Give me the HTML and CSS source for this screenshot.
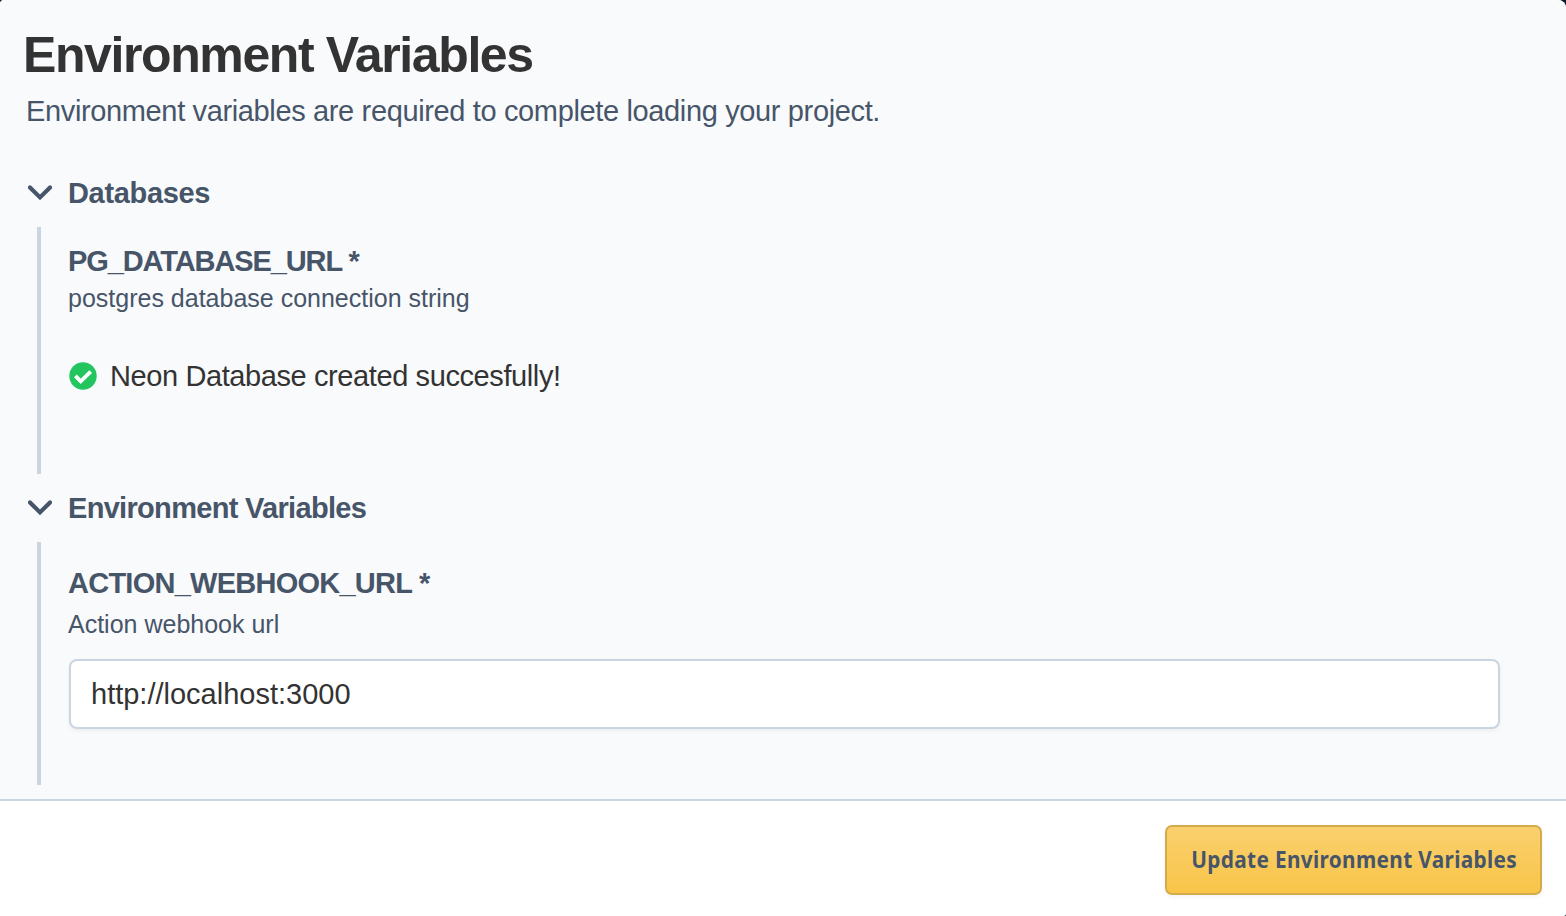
FILE: index.html
```html
<!DOCTYPE html>
<html lang="en">
<head>
<meta charset="utf-8">
<title>Environment Variables</title>
<link rel="stylesheet" href="styles.css">
</head>
<body>
<div class="modal">
  <main class="content">
    <h1 class="title">Environment Variables</h1>
    <p class="subtitle">Environment variables are required to complete loading your project.</p>

    <section class="group">
      <h2 class="group-head group-head-db">
        <svg class="chevron" viewBox="0 0 24 16"><path d="M2 2.4 12 12.4 22 2.4"/></svg>
        <span>Databases</span>
      </h2>
      <div class="group-body group-body-db">
        <h3 class="var-name var-name-db">PG_DATABASE_URL *</h3>
        <p class="var-desc">postgres database connection string</p>
        <div class="status">
          <svg class="check" viewBox="0 0 28 28"><circle cx="14" cy="14" r="13.7"/><path d="M6.4 13.9 11.7 19.3 21.7 9.6"/></svg>
          <span>Neon Database created succesfully!</span>
        </div>
      </div>
    </section>

    <section class="group group-env">
      <h2 class="group-head">
        <svg class="chevron" viewBox="0 0 24 16"><path d="M2 2.4 12 12.4 22 2.4"/></svg>
        <span>Environment Variables</span>
      </h2>
      <div class="group-body group-body-env">
        <h3 class="var-name">ACTION_WEBHOOK_URL *</h3>
        <p class="var-desc var-desc-env">Action webhook url</p>
        <input class="field" type="text" value="http://localhost:3000" aria-label="ACTION_WEBHOOK_URL">
      </div>
    </section>
  </main>
  <footer class="footer">
    <button class="button" type="button"><span class="button-label">Update Environment Variables</span></button>
  </footer>
</div>
</body>
</html>
```
FILE: styles.css
```css
* { box-sizing: border-box; margin: 0; padding: 0; }
body {
  height: 916px;
  overflow: hidden;
  background: #0f172a;
  color: #475569;
  font: 29px/40px "Liberation Sans", Arial, sans-serif;
}
.modal {
  display: flex;
  flex-direction: column;
  height: 916px;
  overflow: hidden;
  border-radius: 4px 8px 2px 0;
  background: #fff;
}
.content {
  height: 801px;
  padding: 27px 66px 0 26px;
  border-bottom: 2px solid #cbd5e1;
  background: #f9fafc;
}
.title {
  margin: 0 0 8px -3px;
  color: #333;
  font-size: 50px;
  line-height: 56px;
  letter-spacing: -1.4px;
}
.subtitle { margin-bottom: 42px; letter-spacing: -.36px; }
.group-head {
  display: flex;
  align-items: center;
  gap: 16px;
  padding-left: 2px;
  margin-bottom: 14px;
  font-size: 29px;
  letter-spacing: -.69px;
}
.group-head-db { letter-spacing: -.33px; }
.chevron { width: 24px; height: 16px; }
.chevron path {
  fill: none;
  stroke: #475569;
  stroke-width: 4.2;
  stroke-linecap: round;
}
.group-body {
  margin-left: 11px;
  padding-left: 28px;
  border-left: 4px solid #cbd5e1;
}
.group-body-db { height: 247px; padding-top: 14px; }
.group-body-env { height: 243px; padding-top: 21px; }
.group-env { margin-top: 14px; }
.var-name { margin-left: -1px; font-size: 29px; letter-spacing: -.75px; }
.var-name-db { letter-spacing: -1.1px; }
.var-desc { margin-left: -1px; font-size: 25px; line-height: 34px; }
.var-desc-env { margin: 4px 0 18px -1px; }
.status {
  display: flex;
  align-items: center;
  gap: 13px;
  margin-top: 41px;
  color: #333;
  letter-spacing: -.4px;
}
.check { width: 28px; height: 28px; }
.check circle { fill: #22c55e; }
.check path { fill: none; stroke: #fff; stroke-width: 3.8; }
.field {
  display: block;
  width: 1431px;
  height: 70px;
  padding: 0 20px;
  border: 2px solid #cbd5e1;
  border-radius: 8px;
  background: #fff;
  box-shadow: 0 2px 4px rgba(0, 0, 0, .05);
  color: #333;
  font: inherit;
}
.footer {
  display: flex;
  justify-content: flex-end;
  padding: 24px 24px 0;
}
.button {
  display: flex;
  align-items: center;
  justify-content: center;
  width: 377px;
  height: 70px;
  padding: 0 0 2px 1px;
  border: 2px solid #d4ab4b;
  border-radius: 7px;
  background: linear-gradient(#fad06f, #f9c548);
  box-shadow: 0 2px 4px rgba(0, 0, 0, .05);
  color: #475569;
  font: 700 24px/36px "Noto Sans", sans-serif;
  white-space: nowrap;
}
.button-label { letter-spacing: .4px; transform: scaleX(.866); }
```
